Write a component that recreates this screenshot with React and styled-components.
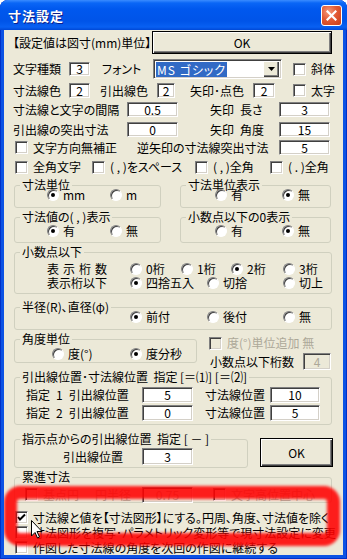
import React from 'react';
import styled, { createGlobalStyle } from 'styled-components';

const FONT = '"Noto Sans CJK JP", "Noto Sans", sans-serif';
const FACE = '#ECE9D8';
const GREY_TEXT = '#ACA899';

const GlobalStyle = createGlobalStyle`
  html, body {
    margin: 0;
    padding: 0;
    background: #fff;
  }
  body {
    font-family: ${FONT};
    font-size: 12px;
    color: #000;
    font-feature-settings: "palt";
  }
`;

const Window = styled.div`
  width: 347px;
  height: 559px;
  display: flex;
  flex-direction: column;
  background: #0B52E4;
  box-shadow: inset 1px 0 #0030C8, inset -1px 0 #0030C8, inset 0 -1px #0030C8;
  border-radius: 8px 8px 0 0;
  overflow: hidden;
`;

const TitleBar = styled.div`
  flex: none;
  height: 30px;
  display: flex;
  align-items: center;
  justify-content: space-between;
  padding: 0 5px 0 8px;
  background: linear-gradient(to bottom, #3A8CFF 0%, #0A66F6 10%, #0058EE 30%, #0054E8 70%, #0860F2 90%, #0048D6 100%);
`;

const TitleText = styled.span`
  color: #fff;
  font-weight: bold;
  font-size: 13px;
  letter-spacing: 1px;
  text-shadow: 1px 1px #0A1E8C;
`;

const CloseButton = styled.div`
  width: 21px;
  height: 21px;
  box-sizing: border-box;
  margin-top: 1px;
  border: 1px solid #fff;
  border-radius: 3px;
  background: radial-gradient(circle at 35% 30%, #F59A7C 0%, #E25A35 45%, #C83C17 100%);
  display: flex;
  align-items: center;
  justify-content: center;
`;

const Client = styled.div`
  flex: 1;
  margin: 0 4px 4px;
  padding: 1px 12px 0 9px;
  background: ${FACE};
  position: relative;
  overflow: hidden;
`;

const Row = styled.div`
  display: flex;
  align-items: ${(p) => p.$align || 'center'};
  height: ${(p) => (p.$h ? `${p.$h}px` : 'auto')};
  margin-top: ${(p) => p.$mt || 0}px;
  padding-left: ${(p) => p.$pl || 0}px;
`;

const Label = styled.span`
  flex: none;
  box-sizing: border-box;
  width: ${(p) => (p.$w ? `${p.$w}px` : 'auto')};
  padding-left: ${(p) => p.$indent || 0}px;
  letter-spacing: ${(p) => p.$ls || 0}px;
  white-space: pre;
  line-height: 14px;
  color: ${(p) => (p.$disabled ? GREY_TEXT : '#000')};
`;

const TextBox = styled.div`
  flex: none;
  box-sizing: border-box;
  width: ${(p) => p.$w}px;
  height: ${(p) => p.$h || 15}px;
  border: 1px solid;
  border-color: #808080 #fff #fff #808080;
  box-shadow: inset 1px 1px #404040, inset -1px -1px #D4D0C8;
  background: ${(p) => (p.$disabled ? FACE : '#fff')};
  color: ${(p) => (p.$disabled ? GREY_TEXT : '#000')};
  display: flex;
  align-items: center;
  justify-content: center;
  line-height: 1;
`;

const Button = styled.div`
  flex: none;
  box-sizing: border-box;
  width: ${(p) => p.$w}px;
  height: ${(p) => p.$h}px;
  margin-left: ${(p) => p.$ml || 0}px;
  margin-bottom: ${(p) => p.$mb || 0}px;
  border: 1px solid #000;
  background: ${FACE};
  box-shadow: inset 1px 1px #fff, inset -1px -1px #404040, inset -2px -2px #808080;
  display: flex;
  align-items: center;
  justify-content: center;
  font-size: 12px;
`;

const CheckItem = styled.span`
  flex: none;
  display: flex;
  align-items: center;
  gap: 5px;
  width: ${(p) => (p.$w ? `${p.$w}px` : 'auto')};
  margin-left: ${(p) => p.$ml || 0}px;
  white-space: pre;
  line-height: 14px;
  color: ${(p) => (p.$disabled ? GREY_TEXT : '#000')};
`;

const Box = styled.span`
  flex: none;
  box-sizing: border-box;
  width: 13px;
  height: 13px;
  border: 1px solid;
  border-color: #808080 #fff #fff #808080;
  box-shadow: inset 1px 1px #404040, inset -1px -1px #D4D0C8;
  background: ${(p) => (p.$disabled ? FACE : '#fff')};
  display: flex;
  align-items: center;
  justify-content: center;
`;

const Option = styled.span`
  flex: none;
  display: flex;
  align-items: center;
  gap: 4px;
  width: ${(p) => (p.$w ? `${p.$w}px` : 'auto')};
  white-space: pre;
  line-height: 14px;
`;

const RadioRing = styled.span`
  flex: none;
  box-sizing: border-box;
  width: 12px;
  height: 12px;
  border-radius: 50%;
  border: 1px solid;
  border-color: #808080 #fff #fff #808080;
  box-shadow: inset 1px 1px #404040;
  background: #fff;
  display: flex;
  align-items: center;
  justify-content: center;
  &::after {
    content: '';
    width: 4px;
    height: 4px;
    border-radius: 50%;
    background: ${(p) => (p.$on ? '#000' : 'transparent')};
  }
`;

const Group = styled.fieldset`
  flex: none;
  box-sizing: border-box;
  min-width: 0;
  width: ${(p) => p.$w}px;
  height: ${(p) => p.$h}px;
  margin: ${(p) => p.$mt || 0}px 0 0 ${(p) => p.$ml ?? 1}px;
  padding: 0;
  border: 1px solid #D0D0BF;
  border-radius: 3px;
`;

const Legend = styled.legend`
  margin-left: 5px;
  padding: 0 2px;
  font-size: 12px;
  line-height: 12px;
  white-space: pre;
`;

const GroupPair = styled.div`
  display: flex;
  gap: ${(p) => p.$gap || 0}px;
  margin-top: ${(p) => p.$mt || 0}px;
  align-items: ${(p) => p.$align || 'flex-start'};
`;

const SideColumn = styled.div`
  display: flex;
  flex-direction: column;
  margin-left: 12px;
  padding-top: 3px;
`;

const Select = styled.div`
  flex: none;
  box-sizing: border-box;
  width: 129px;
  height: 20px;
  border: 1px solid;
  border-color: #808080 #fff #fff #808080;
  box-shadow: inset 1px 1px #404040, inset -1px -1px #D4D0C8;
  background: #fff;
  display: flex;
  align-items: center;
  padding: 2px;
`;

const Selected = styled.span`
  height: 15px;
  padding: 0 1px;
  background: #316AC5;
  color: #fff;
  line-height: 15px;
  letter-spacing: 1px;
  white-space: pre;
`;

const DropButton = styled.span`
  margin-left: auto;
  box-sizing: border-box;
  width: 16px;
  height: 16px;
  background: ${FACE};
  box-shadow: inset 1px 1px #fff, inset -1px -1px #404040, inset -2px -2px #808080;
  display: flex;
  align-items: center;
  justify-content: center;
`;

const Highlight = styled.div`
  position: absolute;
  left: 0;
  top: 456px;
  width: 336px;
  height: 60px;
  box-sizing: border-box;
  border: 13px solid rgba(255, 0, 0, 0.88);
  border-radius: 16px;
  filter: blur(1.6px);
  pointer-events: none;
`;

const Cursor = styled.svg`
  position: absolute;
  left: 27px;
  top: 490px;
`;

const Check = ({ checked, disabled }) => (
  <Box $disabled={disabled}>
    {checked && (
      <svg width="9" height="9" viewBox="0 0 9 9">
        <path d="M1 4 L3 6.5 L8 1.5" stroke="#000" strokeWidth="2" fill="none" />
      </svg>
    )}
  </Box>
);

const Radio = ({ on, w, children }) => (
  <Option $w={w}>
    <RadioRing $on={on} />
    {children}
  </Option>
);

const CheckLabel = ({ checked, disabled, w, ml, children }) => (
  <CheckItem $w={w} $ml={ml} $disabled={disabled}>
    <Check checked={checked} disabled={disabled} />
    {children}
  </CheckItem>
);

export default function App() {
  return (
    <>
      <GlobalStyle />
      <Window>
        <TitleBar>
          <TitleText>寸法設定</TitleText>
          <CloseButton>
            <svg width="11" height="11" viewBox="0 0 11 11">
              <path d="M1.5 1.5 L9.5 9.5 M9.5 1.5 L1.5 9.5" stroke="#fff" strokeWidth="2.2" strokeLinecap="square" />
            </svg>
          </CloseButton>
        </TitleBar>

        <Client>
          <Row $h={23}>
            <Label $w={139}>【設定値は図寸(mm)単位】</Label>
            <Button $w={180} $h={23}>OK</Button>
          </Row>

          <Row $h={20} $mt={5}>
            <Label $w={56}>文字種類</Label>
            <TextBox $w={21} $h={14}>3</TextBox>
            <Label $w={63} $indent={12}>フォント</Label>
            <Select>
              <Selected>MS ゴシック</Selected>
              <DropButton>
                <svg width="7" height="4" viewBox="0 0 7 4">
                  <path d="M0 0 H7 L3.5 4 Z" fill="#000" />
                </svg>
              </DropButton>
            </Select>
            <CheckLabel ml={11}>斜体</CheckLabel>
          </Row>

          <Row $h={15} $mt={4}>
            <Label $w={56}>寸法線色</Label>
            <TextBox $w={21}>2</TextBox>
            <Label $w={67} $indent={10}>引出線色</Label>
            <TextBox $w={18}>2</TextBox>
            <Label $w={78} $indent={15}>矢印･点色</Label>
            <TextBox $w={22}>2</TextBox>
            <CheckLabel ml={18}>太字</CheckLabel>
          </Row>

          <Row $h={15} $mt={4}>
            <Label $w={114}>寸法線と文字の間隔</Label>
            <TextBox $w={51}>0.5</TextBox>
            <Label $w={101} $indent={32}>{'矢印\u2002長さ'}</Label>
            <TextBox $w={51}>3</TextBox>
          </Row>

          <Row $h={15} $mt={5}>
            <Label $w={114}>引出線の突出寸法</Label>
            <TextBox $w={51}>0</TextBox>
            <Label $w={101} $indent={32}>{'矢印\u2002角度'}</Label>
            <TextBox $w={51}>15</TextBox>
          </Row>

          <Row $h={15} $mt={3} $pl={2}>
            <CheckLabel w={122}>文字方向無補正</CheckLabel>
            <Label $w={142}>逆矢印の寸法線突出寸法</Label>
            <TextBox $w={51}>5</TextBox>
          </Row>

          <Row $h={14} $mt={5} $pl={2}>
            <CheckLabel w={77}>全角文字</CheckLabel>
            <CheckLabel w={103}>( , )をスペース</CheckLabel>
            <CheckLabel w={75}>( , )全角</CheckLabel>
            <CheckLabel>( . )全角</CheckLabel>
          </Row>

          <GroupPair $gap={19} $mt={5}>
            <Group $w={147} $h={29}>
              <Legend>寸法単位</Legend>
              <Row $h={12} $mt={-2} $pl={32}>
                <Radio on w={63}>mm</Radio>
                <Radio>m</Radio>
              </Row>
            </Group>
            <Group $w={151} $h={29} $ml={0}>
              <Legend>寸法単位表示</Legend>
              <Row $h={12} $mt={-2} $pl={34}>
                <Radio w={67}>有</Radio>
                <Radio on>無</Radio>
              </Row>
            </Group>
          </GroupPair>

          <GroupPair $gap={19} $mt={3}>
            <Group $w={147} $h={32}>
              <Legend>寸法値の( , )表示</Legend>
              <Row $h={12} $mt={2} $pl={32}>
                <Radio on w={63}>有</Radio>
                <Radio>無</Radio>
              </Row>
            </Group>
            <Group $w={151} $h={32} $ml={0}>
              <Legend>小数点以下の0表示</Legend>
              <Row $h={12} $mt={2} $pl={34}>
                <Radio w={67}>有</Radio>
                <Radio on>無</Radio>
              </Row>
            </Group>
          </GroupPair>

          <Group $w={318} $h={48} $mt={3}>
            <Legend>小数点以下</Legend>
            <Row $h={14} $mt={4} $pl={32}>
              <Label $w={83} $ls={4}>表示桁数</Label>
              <Radio w={51}>0桁</Radio>
              <Radio w={50}>1桁</Radio>
              <Radio on w={52}>2桁</Radio>
              <Radio>3桁</Radio>
            </Row>
            <Row $h={14} $pl={32}>
              <Label $w={83}>表示桁以下</Label>
              <Radio on w={77}>四捨五入</Radio>
              <Radio w={76}>切捨</Radio>
              <Radio>切上</Radio>
            </Row>
          </Group>

          <Group $w={318} $h={29} $mt={7}>
            <Legend>半径(R)、直径(φ)</Legend>
            <Row $h={12} $mt={-2} $pl={115}>
              <Radio on w={77}>前付</Radio>
              <Radio w={76}>後付</Radio>
              <Radio>無</Radio>
            </Row>
          </Group>

          <GroupPair $mt={3}>
            <Group $w={183} $h={30}>
              <Legend>角度単位</Legend>
              <Row $h={12} $mt={3} $pl={37}>
                <Radio w={78}>度(°)</Radio>
                <Radio on>度分秒</Radio>
              </Row>
            </Group>
            <SideColumn>
              <CheckLabel disabled>度(°)単位追加 無</CheckLabel>
              <Row $h={17} $mt={3} $pl={1}>
                <Label $w={93}>小数点以下桁数</Label>
                <TextBox $w={28} $h={17} $disabled>4</TextBox>
              </Row>
            </SideColumn>
          </GroupPair>

          <Group $w={318} $h={54} $mt={1}>
            <Legend>引出線位置･寸法線位置  指定 [＝⑴] [＝⑵]</Legend>
            <Row $h={16} $mt={4} $pl={11}>
              <Label $w={116}>{'指定\u20021\u2002引出線位置'}</Label>
              <TextBox $w={51} $h={16}>5</TextBox>
              <Label $w={77} $indent={12}>寸法線位置</Label>
              <TextBox $w={50} $h={16}>10</TextBox>
            </Row>
            <Row $h={16} $mt={2} $pl={11}>
              <Label $w={116}>{'指定\u20022\u2002引出線位置'}</Label>
              <TextBox $w={51} $h={16}>0</TextBox>
              <Label $w={77} $indent={12}>寸法線位置</Label>
              <TextBox $w={50} $h={16}>5</TextBox>
            </Row>
          </Group>

          <GroupPair $mt={8} $align="flex-end">
            <Group $w={234} $h={35}>
              <Legend>指示点からの引出線位置  指定 [ － ]</Legend>
              <Row $h={17} $mt={3} $pl={11}>
                <Label $w={116} $indent={37}>引出線位置</Label>
                <TextBox $w={51} $h={17}>3</TextBox>
              </Row>
            </Group>
            <Button $w={73} $h={29} $ml={12} $mb={1}>OK</Button>
          </GroupPair>

          <Group $w={318} $h={32} $mt={3}>
            <Legend>累進寸法</Legend>
            <Row $h={13} $mt={5} $pl={10}>
              <CheckLabel disabled w={70}>基点円</CheckLabel>
              <Label $w={47} $disabled>円半径</Label>
              <TextBox $w={51} $h={16} $disabled>0.75</TextBox>
              <CheckLabel disabled ml={20}>文字高位置中心</CheckLabel>
            </Row>
          </Group>

          <Row $h={15} $mt={7} $pl={2}>
            <CheckLabel checked>寸法線と値を【寸法図形】にする。円周、角度、寸法値を除く</CheckLabel>
          </Row>
          <Row $h={15} $pl={2}>
            <CheckLabel>寸法図形を複写･パラメトリック変形等で現寸法設定に変更</CheckLabel>
          </Row>
          <Row $h={15} $pl={2}>
            <CheckLabel>作図した寸法線の角度を次回の作図に継続する</CheckLabel>
          </Row>

          <Highlight />
          <Cursor width="12" height="19" viewBox="0 0 12 19">
            <path d="M0.5 0.5 V16 L4 12.5 L6.5 18 L8.5 17 L6 11.5 H11 Z" fill="#fff" stroke="#000" strokeWidth="1" />
          </Cursor>
        </Client>
      </Window>
    </>
  );
}
